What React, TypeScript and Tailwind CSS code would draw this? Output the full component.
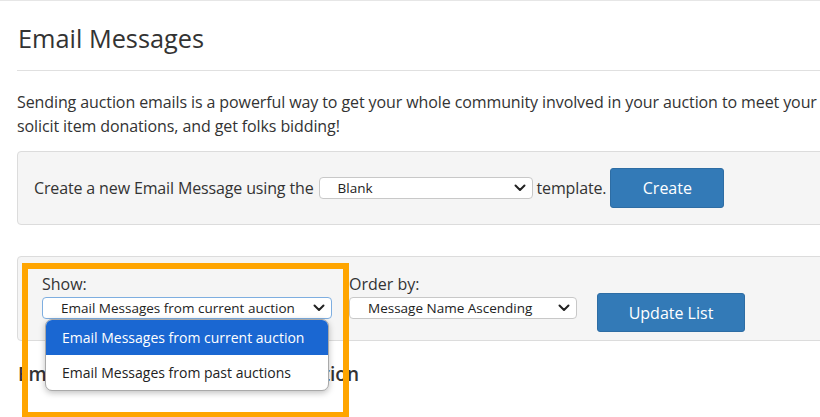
function Chevron() {
  return (
    <svg width="12" height="8" viewBox="0 0 12 8" className="shrink-0">
      <path d="M1.5 1.5 L6 6 L10.5 1.5" fill="none" stroke="#222" strokeWidth="2" strokeLinecap="round" strokeLinejoin="round" />
    </svg>
  );
}

function FakeSelect({ value, width, focused }: { value: string; width: string; focused?: boolean }) {
  return (
    <div
      className={`flex h-[22px] items-center justify-between rounded-[4px] border bg-white pl-[18px] pr-[6px] text-[13.5px] leading-[20px] tracking-normal text-[#222] ${width} ${
        focused ? 'border-[#7eaee0]' : 'border-[#c8c8c8]'
      }`}
    >
      <span className="whitespace-nowrap">{value}</span>
      <Chevron />
    </div>
  );
}

function BlueButton({ label, size }: { label: string; size: string }) {
  return (
    <button
      className={`flex shrink-0 items-center justify-center rounded-[3px] border border-[#2e6da4] bg-[#337ab7] text-[16px] tracking-normal text-white ${size}`}
    >
      {label}
    </button>
  );
}

export default function App() {
  return (
    <div className="relative h-[417px] w-[820px] overflow-hidden border-t border-[#e6e6e6] bg-white font-['Open_Sans',sans-serif] text-[#333]">
      <div className="w-[1100px] pl-[17px]">
        <h1 className="pl-px pt-[22px] text-[25.3px] leading-[30px] font-normal">Email Messages</h1>
        <hr className="mt-[17px] border-t border-[#e0e0e0]" />
        <p className="mt-[19px] text-[16px] leading-[24px] tracking-[-0.1px]">
          Sending auction emails is a powerful way to get your whole community involved in your auction to meet your fundraising goals,
          <br />
          solicit item donations, and get folks bidding!
        </p>

        <div className="mt-[13px] flex items-center rounded-[4px] border border-[#dcdcdc] bg-[#f5f5f5] py-[16px] pl-[16px] text-[16px] tracking-[-0.14px]">
          <span className="whitespace-nowrap">Create a new Email Message using the</span>
          <div className="ml-[5px]">
            <FakeSelect value="Blank" width="w-[214px]" />
          </div>
          <span className="ml-[4px] whitespace-nowrap">template.</span>
          <div className="ml-[4px]">
            <BlueButton label="Create" size="h-[40px] w-[114px]" />
          </div>
        </div>

        <div className="mt-[31px] flex h-[85px] items-start rounded-[4px] border border-[#dcdcdc] bg-[#f5f5f5] pl-[24px] pt-[15px] text-[16px]">
          <div className="relative flex flex-col">
            <span className="leading-[24px]">Show:</span>
            <div className="mt-px">
              <FakeSelect value="Email Messages from current auction" width="w-[290px]" focused />
            </div>
            <div className="absolute left-[3px] top-[47px] z-10 w-[284px] overflow-hidden rounded-[7px] border border-[#a9a9a9] bg-white text-[14px] shadow-[0_2px_6px_rgba(0,0,0,0.25)]">
              <div className="flex h-[35px] items-center bg-[#1a67d2] pl-[16px] text-white">Email Messages from current auction</div>
              <div className="flex h-[35px] items-center pl-[16px] text-[#222]">Email Messages from past auctions</div>
            </div>
          </div>
          <div className="ml-[17px] flex flex-col">
            <span className="leading-[24px]">Order by:</span>
            <div className="mt-px">
              <FakeSelect value="Message Name Ascending" width="w-[228px]" />
            </div>
          </div>
          <div className="ml-[20px] mt-[21px]">
            <BlueButton label="Update List" size="h-[39px] w-[148px]" />
          </div>
        </div>

        <h3 className="mt-[22px] pl-px text-[19px] leading-[22px] font-semibold">Email Messages from current auction</h3>
      </div>

      <div className="absolute left-[22px] top-[262px] h-[155px] w-[327px] border-[6px] border-[#ffa500]" />
    </div>
  );
}
